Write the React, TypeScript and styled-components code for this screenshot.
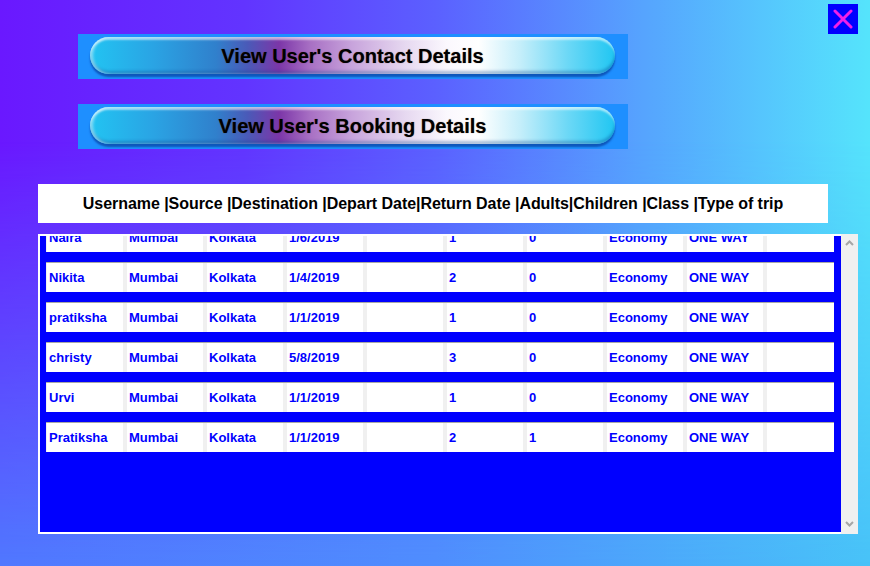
import React, { useLayoutEffect, useRef } from "react";
import styled, { createGlobalStyle } from "styled-components";

const GlobalStyle = createGlobalStyle`
  html, body {
    margin: 0;
    padding: 0;
  }
  body {
    font-family: "Liberation Sans", Arial, sans-serif;
  }
`;

const bookings: string[][] = [
  ["Naira", "Mumbai", "Kolkata", "1/6/2019", "", "1", "0", "Economy", "ONE WAY", ""],
  ["Nikita", "Mumbai", "Kolkata", "1/4/2019", "", "2", "0", "Economy", "ONE WAY", ""],
  ["pratiksha", "Mumbai", "Kolkata", "1/1/2019", "", "1", "0", "Economy", "ONE WAY", ""],
  ["christy", "Mumbai", "Kolkata", "5/8/2019", "", "3", "0", "Economy", "ONE WAY", ""],
  ["Urvi", "Mumbai", "Kolkata", "1/1/2019", "", "1", "0", "Economy", "ONE WAY", ""],
  ["Pratiksha", "Mumbai", "Kolkata", "1/1/2019", "", "2", "1", "Economy", "ONE WAY", ""],
];

function App() {
  const listRef = useRef<HTMLDivElement>(null);

  // the list is shown already scrolled a little
  useLayoutEffect(() => {
    if (listRef.current) listRef.current.scrollTop = 26;
  }, []);

  return (
    <>
      <GlobalStyle />
      <Page>
        <CloseRow>
          <CloseButton aria-label="close">
            <svg width="20" height="20" viewBox="0 0 20 20">
              <path
                d="M2 2 L18 18 M18 2 L2 18"
                stroke="#f020e8"
                strokeWidth="3"
                strokeLinecap="round"
              />
            </svg>
          </CloseButton>
        </CloseRow>
        <ButtonStack>
          <GlossyFrame>
            <Pill>View User's Contact Details</Pill>
          </GlossyFrame>
          <GlossyFrame>
            <Pill>View User's Booking Details</Pill>
          </GlossyFrame>
        </ButtonStack>
        <HeaderBar>
          Username |Source |Destination |Depart Date|Return Date |Adults|Children |Class |Type of trip
        </HeaderBar>
        <TableFrame>
          <Viewport ref={listRef}>
            <RowList>
              {bookings.map((row, i) => (
                <Row key={i}>
                  {row.map((cell, j) => (
                    <Cell key={j} last={j === row.length - 1}>
                      {cell}
                    </Cell>
                  ))}
                </Row>
              ))}
            </RowList>
          </Viewport>
          <ScrollTrack>
            <svg width="9" height="6" viewBox="0 0 9 6">
              <polyline points="1,5 4.5,1.5 8,5" fill="none" stroke="#a6a6a6" strokeWidth="2" />
            </svg>
            <svg width="9" height="6" viewBox="0 0 9 6">
              <polyline points="1,1 4.5,4.5 8,1" fill="none" stroke="#a6a6a6" strokeWidth="2" />
            </svg>
          </ScrollTrack>
        </TableFrame>
      </Page>
    </>
  );
}

const Page = styled.div`
  position: relative;
  width: 870px;
  height: 566px;
  box-sizing: border-box;
  padding: 4px 0 0 38px;
  display: flex;
  flex-direction: column;
  overflow: hidden;
  background: linear-gradient(
    90deg,
    #6a18ff 0%,
    #6234ff 28%,
    #5b60ff 50%,
    #56a4fe 74%,
    #55e4fc 100%
  );
  &::before {
    content: "";
    position: absolute;
    inset: 0;
    background: linear-gradient(90deg, #5078ff 0%, #4f8efe 50%, #48c2f8 100%);
    -webkit-mask-image: linear-gradient(180deg, transparent 25%, black 100%);
    mask-image: linear-gradient(180deg, transparent 25%, black 100%);
  }
  & > * {
    position: relative;
  }
`;

const CloseRow = styled.div`
  height: 30px;
  display: flex;
  justify-content: flex-end;
  padding-right: 12px;
`;

const CloseButton = styled.button`
  width: 30px;
  height: 30px;
  padding: 0;
  border: none;
  background: #0000ff;
  display: flex;
  align-items: center;
  justify-content: center;
  cursor: pointer;
`;

const ButtonStack = styled.div`
  display: flex;
  flex-direction: column;
  gap: 25px;
  margin-left: 40px;
`;

const GlossyFrame = styled.div`
  width: 550px;
  height: 45px;
  box-sizing: border-box;
  padding: 3px 13px 0 12px;
  background: #1e8fff;
`;

const Pill = styled.div`
  height: 37px;
  border-radius: 19px;
  display: flex;
  align-items: center;
  justify-content: center;
  padding-top: 2px;
  box-sizing: border-box;
  font-size: 20px;
  font-weight: bold;
  color: #000;
  text-shadow: 0 0 1px rgba(80, 30, 0, 0.6);
  background: linear-gradient(
    90deg,
    #22c4f2 0%,
    #2aa4e4 12%,
    #3080cc 24%,
    #4a5ab8 30%,
    #7c36a8 36%,
    #a870c4 42%,
    #c8a4dc 50%,
    #e6d8f0 60%,
    #fbf8fe 68%,
    #ffffff 74%,
    #c4eefa 82%,
    #6cd8f6 91%,
    #20c6f2 100%
  );
  box-shadow: inset 0 4px 2px -1px rgba(255, 255, 255, 0.55),
    inset 3px 0 3px rgba(255, 255, 255, 0.45),
    inset 0 -3px 3px rgba(0, 60, 140, 0.35),
    0 3px 2px rgba(0, 40, 130, 0.55);
`;

const HeaderBar = styled.div`
  width: 790px;
  height: 39px;
  margin-top: 35px;
  background: #ffffff;
  display: flex;
  align-items: center;
  justify-content: center;
  font-size: 16px;
  font-weight: bold;
  letter-spacing: -0.05px;
  color: #000;
  white-space: pre;
`;

const TableFrame = styled.div`
  width: 820px;
  height: 300px;
  margin-top: 11px;
  display: flex;
`;

const Viewport = styled.div`
  flex: 1;
  border: 2px solid #ffffff;
  border-right: none;
  background: #0000ff;
  overflow: hidden;
`;

const RowList = styled.div`
  display: flex;
  flex-direction: column;
  gap: 10px;
  padding: 10px 7px 80px 6px;
`;

const Row = styled.div`
  height: 30px;
  box-sizing: border-box;
  display: flex;
  gap: 4px;
  padding-left: 1px;
  background: #f0f0f0;
  border-top: 1px solid #a8a8a8;
`;

const Cell = styled.div<{ last?: boolean }>`
  width: ${({ last }) => (last ? "auto" : "76px")};
  flex: ${({ last }) => (last ? "1" : "none")};
  background: #ffffff;
  display: flex;
  align-items: center;
  padding-left: 2px;
  box-sizing: border-box;
  font-size: 13px;
  font-weight: bold;
  color: #0000ff;
  white-space: nowrap;
`;

const ScrollTrack = styled.div`
  width: 17px;
  background: #f0f0f0;
  display: flex;
  flex-direction: column;
  justify-content: space-between;
  align-items: center;
  padding: 6px 0 7px;
  box-sizing: border-box;
`;

export default App;
